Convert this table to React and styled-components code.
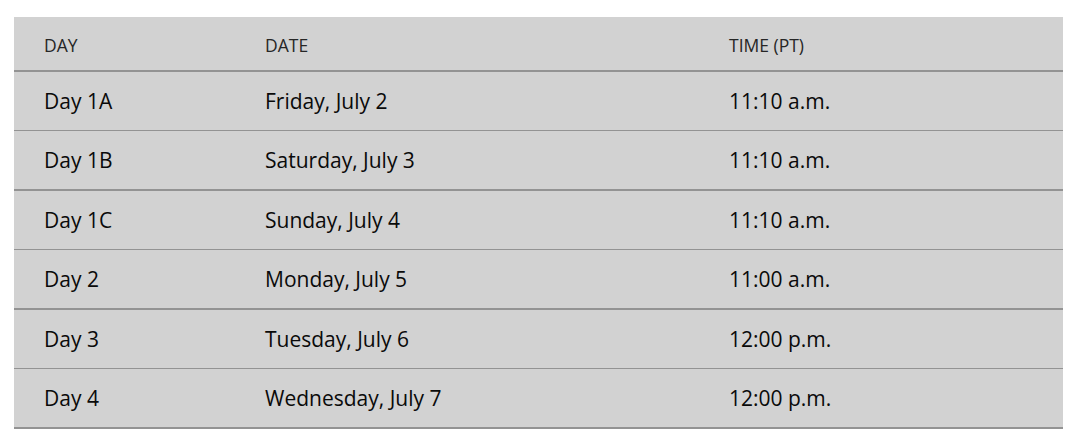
import styled, { createGlobalStyle } from 'styled-components'

const rows = [
    { day: 'Day 1A', date: 'Friday, July 2', time: '11:10 a.m.' },
    { day: 'Day 1B', date: 'Saturday, July 3', time: '11:10 a.m.' },
    { day: 'Day 1C', date: 'Sunday, July 4', time: '11:10 a.m.' },
    { day: 'Day 2', date: 'Monday, July 5', time: '11:00 a.m.' },
    { day: 'Day 3', date: 'Tuesday, July 6', time: '12:00 p.m.' },
    { day: 'Day 4', date: 'Wednesday, July 7', time: '12:00 p.m.' },
]

const Global = createGlobalStyle`
    body {
        margin: 0;
        background: #fff;
        font-family: "Open Sans", "Noto Sans", sans-serif;
    }
`

const Page = styled.div`
    padding: 17px 8px 0 14px;
`

const Table = styled.div`
    background: #d2d2d2;
    display: flex;
    flex-direction: column;
`

const Row = styled.div`
    display: grid;
    grid-template-columns: 221px 464px 1fr;
    align-items: center;
    height: ${p => p.head ? '53px' : '58px'};
    border-bottom: ${p => p.thick ? '2px' : '1px'} solid #939393;
`

const Cell = styled.div`
    padding-left: 30px;
    font-size: ${p => p.head ? '17.5px' : '21px'};
    color: ${p => p.head ? '#262626' : '#0a0a0a'};
    text-transform: ${p => p.head ? 'uppercase' : 'none'};
    padding-top: ${p => p.head ? '2px' : '0'};
`

function App() {
    return (
        <>
            <Global />
            <Page>
                <Table>
                    <Row head thick>
                        <Cell head>Day</Cell>
                        <Cell head>Date</Cell>
                        <Cell head>Time (PT)</Cell>
                    </Row>
                    {rows.map((r, i) => (
                        <Row key={i} thick={i % 2 === 1}>
                            <Cell>{r.day}</Cell>
                            <Cell>{r.date}</Cell>
                            <Cell>{r.time}</Cell>
                        </Row>
                    ))}
                </Table>
            </Page>
        </>
    )
}

export default App
